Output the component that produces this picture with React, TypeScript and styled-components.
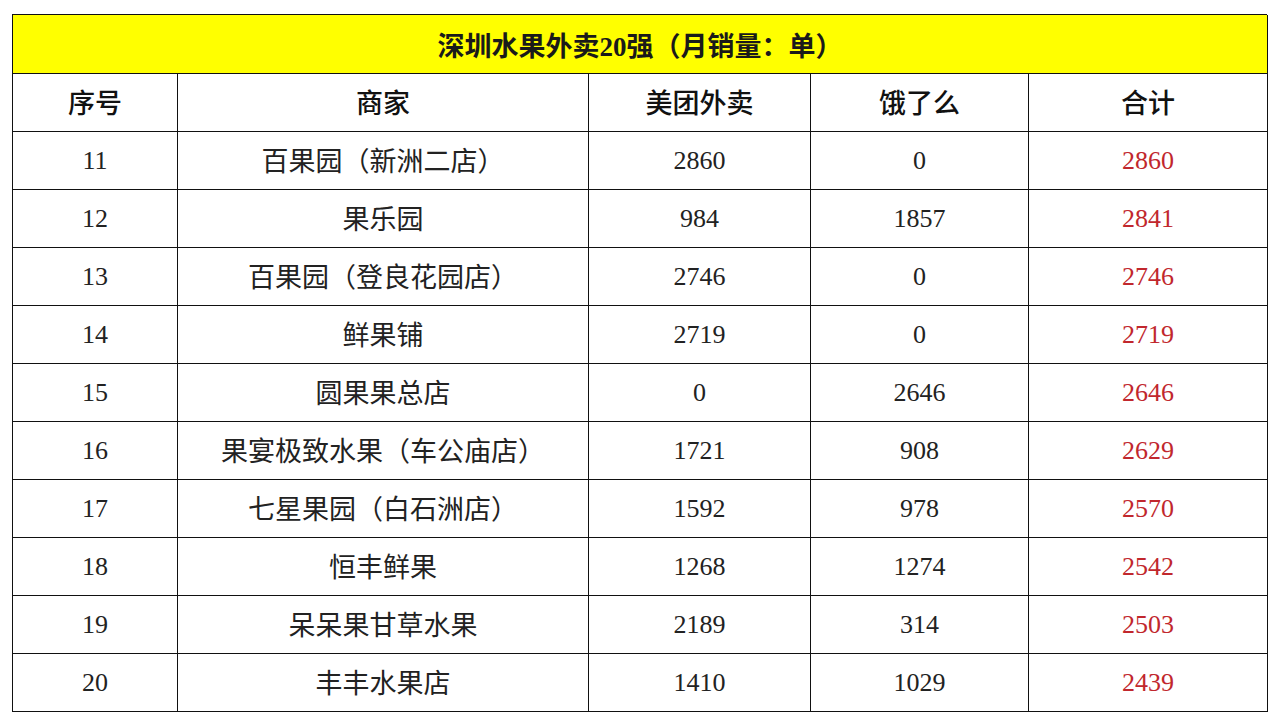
import React from "react";
import styled, { createGlobalStyle } from "styled-components";

const Global = createGlobalStyle`
  html, body { margin: 0; padding: 0; background: #ffffff; }
  body { font-family: "Liberation Serif", "Noto Sans CJK SC", serif; }
`;

const Page = styled.div`
  width: 1280px;
  height: 720px;
  padding: 14px 0 0 12px;
  box-sizing: border-box;
  background: #fff;
`;

const Table = styled.div`
  display: grid;
  grid-template-columns: 165px 411px 222px 218px 239px;
  grid-template-rows: 59px 58px repeat(10, 58px);
  width: 1255px;
  border-top: 1.5px solid #111;
  border-left: 1.5px solid #111;
  box-sizing: border-box;
`;

const Title = styled.div`
  grid-column: 1 / -1;
  background: #ffff00;
  border-right: 1.5px solid #111;
  border-bottom: 1.5px solid #111;
  display: flex;
  align-items: center;
  justify-content: center;
  font-size: 27px;
  font-weight: 700;
  color: #1a1a1a;
`;

const Cell = styled.div<{ $head?: boolean; $red?: boolean; $cjk?: boolean }>`
  border-right: 1.5px solid #111;
  border-bottom: 1.5px solid #111;
  display: flex;
  align-items: center;
  justify-content: center;
  padding-bottom: ${(p) => (p.$cjk ? "3px" : "0")};
  font-size: ${(p) => (p.$cjk ? "27px" : "26px")};
  font-weight: ${(p) => (p.$head ? 500 : 400)};
  color: ${(p) => (p.$red ? "#c1272d" : p.$head ? "#111" : "#222")};
  white-space: nowrap;
`;

const rows: [string, string, string, string, string][] = [
  ["11", "百果园（新洲二店）", "2860", "0", "2860"],
  ["12", "果乐园", "984", "1857", "2841"],
  ["13", "百果园（登良花园店）", "2746", "0", "2746"],
  ["14", "鲜果铺", "2719", "0", "2719"],
  ["15", "圆果果总店", "0", "2646", "2646"],
  ["16", "果宴极致水果（车公庙店）", "1721", "908", "2629"],
  ["17", "七星果园（白石洲店）", "1592", "978", "2570"],
  ["18", "恒丰鲜果", "1268", "1274", "2542"],
  ["19", "呆呆果甘草水果", "2189", "314", "2503"],
  ["20", "丰丰水果店", "1410", "1029", "2439"],
];

const heads = ["序号", "商家", "美团外卖", "饿了么", "合计"];

export default function App() {
  return (
    <>
      <Global />
      <Page>
        <Table>
          <Title>深圳水果外卖20强（月销量：单）</Title>
          {heads.map((h) => (
            <Cell key={h} $head $cjk>
              {h}
            </Cell>
          ))}
          {rows.map((r) => (
            <React.Fragment key={r[0]}>
              <Cell>{r[0]}</Cell>
              <Cell $cjk>{r[1]}</Cell>
              <Cell>{r[2]}</Cell>
              <Cell>{r[3]}</Cell>
              <Cell $red>{r[4]}</Cell>
            </React.Fragment>
          ))}
        </Table>
      </Page>
    </>
  );
}
